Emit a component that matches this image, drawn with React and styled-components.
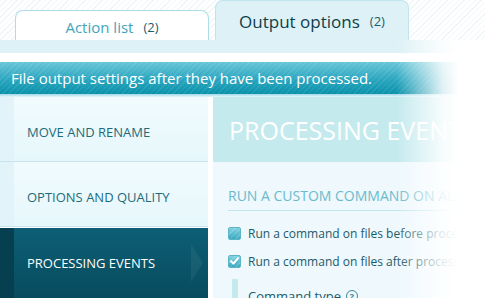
import React from 'react'
import styled, { createGlobalStyle, css } from 'styled-components'

const GlobalStyle = createGlobalStyle`
  html, body { margin: 0; padding: 0; background: #fff; }
  body { font-family: "Open Sans", "Noto Sans", sans-serif; }
`

const hatch = (color) => `repeating-linear-gradient(135deg, ${color} 0 1px, transparent 1px 4px)`

const Page = styled.div`
  position: relative;
  width: 485px;
  height: 298px;
  overflow: hidden;
  background: #fff;
  display: flex;
  flex-direction: column;
`

const TabsRow = styled.div`
  height: 40px;
  display: flex;
  align-items: flex-end;
  gap: 6px;
  padding-left: 15px;
  background: ${hatch('rgba(200, 225, 232, 0.3)')}, #fff;
  flex-shrink: 0;
`

const Tab = styled.div`
  box-sizing: border-box;
  width: 194px;
  height: 30px;
  display: flex;
  align-items: center;
  justify-content: center;
  gap: 10px;
  padding-top: 2px;
  background: #fff;
  border: 1px solid #acdde8;
  border-bottom: none;
  border-radius: 8px 8px 0 0;
  color: #3ea5bc;
  font-size: 15px;
  ${p => p.$active && css`
    height: 40px;
    background: #ddf1f6;
    border-color: #c0e5ed;
    color: #0e3f4a;
    font-size: 17px;
    padding-top: 1px;
  `}
`

const Count = styled.span`
  font-size: 13px;
  color: #1c5d6b;
`

const Strip = styled.div`
  height: 13px;
  background: #ddf1f6;
  flex-shrink: 0;
`

const Banner = styled.div`
  margin-top: 9px;
  height: 32px;
  display: flex;
  align-items: center;
  padding-left: 11px;
  background: ${hatch('rgba(255, 255, 255, 0.09)')},
    linear-gradient(to bottom, #68c5d8, #2aa6bf 55%, #0a91ab);
  color: #fff;
  font-size: 15px;
  white-space: nowrap;
  flex-shrink: 0;
`

const BannerEdge = styled.div`
  height: 3px;
  background: linear-gradient(#9fd9e5, #e4f5fa);
  flex-shrink: 0;
`

const Main = styled.div`
  flex: 1;
  display: flex;
  gap: 5px;
  min-height: 0;
`

const Nav = styled.div`
  width: 208px;
  display: flex;
  flex-direction: column;
  flex-shrink: 0;
`

const NavItem = styled.div`
  box-sizing: border-box;
  height: 65px;
  display: flex;
  align-items: center;
  justify-content: space-between;
  padding: 5px 5px 0 27px;
  border-bottom: 1px solid #c6e5ed;
  background: linear-gradient(to right, #e2f4f9 0 14px, transparent 14px),
    linear-gradient(to bottom, #f1fbfe, #e6f7fb);
  color: #1e6b7b;
  font-size: 13px;
  text-transform: uppercase;
  white-space: nowrap;
  ${p => p.$active && css`
    flex: 1;
    padding-top: 0;
    border-bottom: none;
    margin-top: 1px;
    background: linear-gradient(to right, #063f50 0 14px, transparent 14px),
      linear-gradient(to bottom, #0c5f75, #084b5e);
    color: #fff;
  `}
`

const Panel = styled.div`
  flex: 1;
  display: flex;
  flex-direction: column;
  background: #eef8fd;
`

const PanelHeader = styled.div`
  height: 65px;
  display: flex;
  align-items: center;
  padding: 1px 0 0 16px;
  box-sizing: border-box;
  background: #c4eaee;
  color: #fff;
  font-size: 25px;
  white-space: nowrap;
  flex-shrink: 0;
`

const PanelBody = styled.div`
  padding: 24px 0 0 15px;
`

const SectionTitle = styled.div`
  padding-bottom: 5px;
  border-bottom: 1px solid #bfe6ec;
  color: #6bbbcb;
  font-size: 14px;
  text-transform: uppercase;
  white-space: nowrap;
`

const CheckRow = styled.div`
  display: flex;
  align-items: center;
  gap: 7px;
  height: 16px;
  margin-top: ${p => p.$top}px;
  color: #1c5b68;
  font-size: 12px;
  white-space: nowrap;
`

const Box = styled.span`
  box-sizing: border-box;
  width: 13px;
  height: 13px;
  border-radius: 2px;
  border: 1px solid #5bb5c7;
  background: ${hatch('rgba(255, 255, 255, 0.18)')},
    linear-gradient(to bottom, #82d1e0, #38a8bf);
  display: flex;
  align-items: center;
  justify-content: center;
  flex-shrink: 0;
`

const SubBlock = styled.div`
  margin: 10px 0 0 4px;
  padding: 8px 0 0 10px;
  border-left: 6px solid #c4eaee;
  display: flex;
  align-items: center;
  gap: 5px;
  color: #1c5b68;
  font-size: 13px;
  white-space: nowrap;
`

const Help = styled.span`
  box-sizing: border-box;
  width: 12px;
  height: 12px;
  border-radius: 50%;
  border: 1px solid #3d8896;
  color: #3d8896;
  font-size: 9px;
  font-weight: 700;
  display: flex;
  align-items: center;
  justify-content: center;
`

const FadeOut = styled.div`
  position: absolute;
  top: 40px;
  bottom: 0;
  left: 396px;
  right: 0;
  background: linear-gradient(to right, rgba(255, 255, 255, 0) 0px, rgba(255, 255, 255, 0.85) 46px, #fff 62px);
  pointer-events: none;
`

function Check() {
  return (
    <svg width="9" height="8" viewBox="0 0 9 8">
      <path d="M1 4.2 L3.5 6.5 L8 1.2" fill="none" stroke="#fff" strokeWidth="2" strokeLinecap="round" strokeLinejoin="round" />
    </svg>
  )
}

function Arrow() {
  return (
    <svg width="12" height="38" viewBox="0 0 12 38">
      <path d="M0 0 L12 19 L0 38 Z" fill="rgba(255,255,255,0.06)" />
    </svg>
  )
}

export default function App() {
  return (
    <Page>
      <GlobalStyle />
      <TabsRow>
        <Tab>Action list <Count>(2)</Count></Tab>
        <Tab $active>Output options <Count>(2)</Count></Tab>
      </TabsRow>
      <Strip />
      <Banner>File output settings after they have been processed.</Banner>
      <BannerEdge />
      <Main>
        <Nav>
          <NavItem>Move and rename</NavItem>
          <NavItem>Options and quality</NavItem>
          <NavItem $active>Processing events <Arrow /></NavItem>
        </Nav>
        <Panel>
          <PanelHeader>PROCESSING EVENTS</PanelHeader>
          <PanelBody>
            <SectionTitle>Run a custom command on all files</SectionTitle>
            <CheckRow $top={14}><Box />Run a command on files before processing</CheckRow>
            <CheckRow $top={12}><Box><Check /></Box>Run a command on files after processing</CheckRow>
            <SubBlock>Command type <Help>?</Help></SubBlock>
          </PanelBody>
        </Panel>
      </Main>
      <FadeOut />
    </Page>
  )
}
